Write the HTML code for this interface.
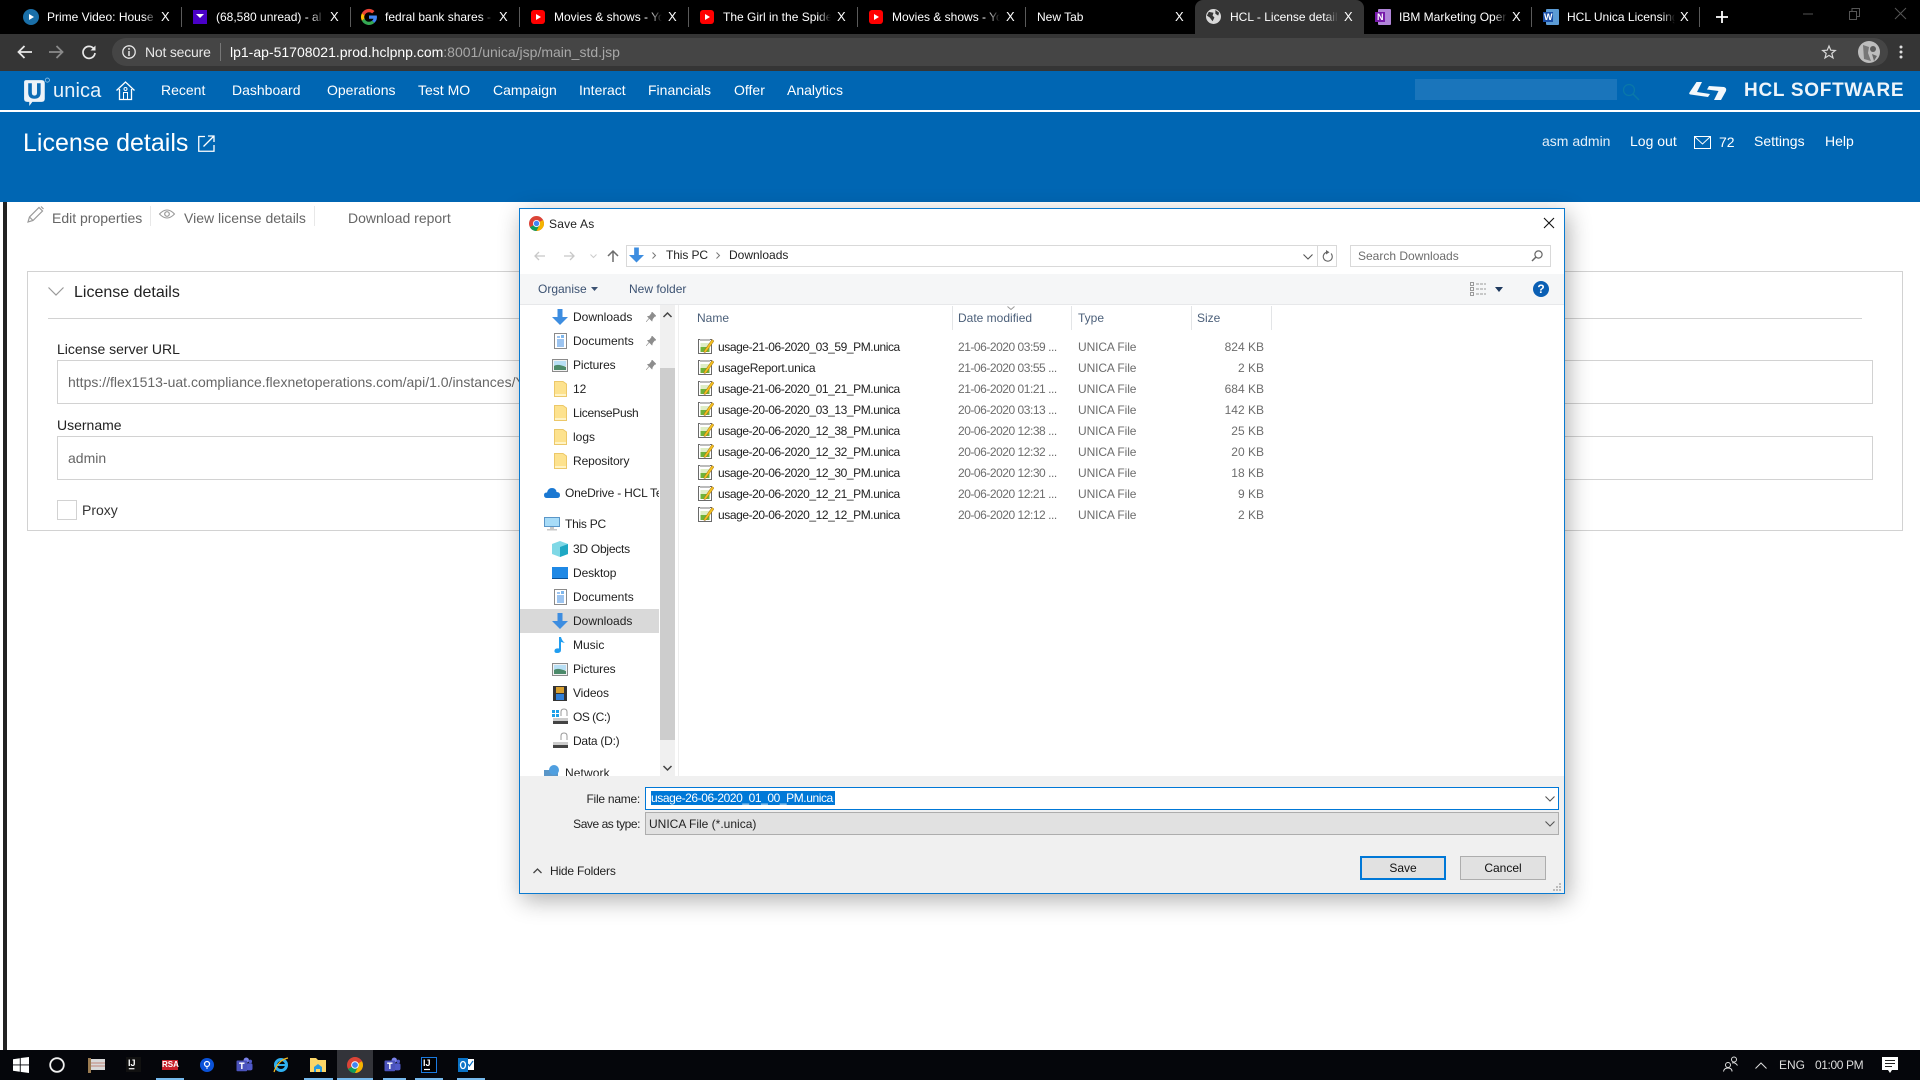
<!DOCTYPE html>
<html><head><meta charset="utf-8"><title>License details</title>
<style>
*{box-sizing:border-box}
html,body{margin:0;padding:0;width:1920px;height:1080px;overflow:hidden;background:#fff;font-family:"Liberation Sans",sans-serif}
.a{position:absolute}
.t{position:absolute;white-space:nowrap;line-height:20px;height:20px;font-size:12px}
.w{color:#fff}
svg{position:absolute;display:block;overflow:visible}
.tab{color:#fff;font-size:12px;overflow:hidden;-webkit-mask-image:linear-gradient(90deg,#000 88%,transparent)}
.x{color:#fff;font-size:13px}
.sep{position:absolute;width:1px;height:20px;top:7px;background:#5a5a5a}
.nav{color:#fff;font-size:14px}
.n{color:#1f1f1f;font-size:12px}
.f{color:#1f1f1f;font-size:12px;letter-spacing:-.42px}
.d{color:#6d6d6d;font-size:12px;letter-spacing:-.47px}
.ty{color:#6d6d6d;font-size:12px;letter-spacing:-.1px}
.s{color:#6d6d6d;font-size:12px;text-align:right;width:60px;left:1204px}
.h{color:#4c607a;font-size:12px}
.vl{position:absolute;width:1px;background:#e3e5e7;top:306px;height:24px}
.tb{position:absolute;top:1078px;height:2px;background:#76b9ed}
</style></head>
<body>
<svg width="0" height="0" style="position:absolute"><defs>
<symbol id="file" viewBox="0 0 16 16"><rect x=".5" y="1.500" width="13" height="14" fill="#fff" stroke="#6a6a6a"/><rect x="2" y="1" width="10" height="2" fill="#bbb"/><rect x="2.500" y="5" width="9" height="9" fill="#dfeec6"/><rect x="2.500" y="9" width="9" height="5" fill="#6fb33a"/><path d="M6 13 L14 1.500 L16 3 L8 14 L6 14.500Z" fill="#f4c020" stroke="#9a6a10" stroke-width=".5"/></symbol>
<symbol id="folder" viewBox="0 0 13 16"><path d="M.5.5H9L12.500 3V15.500H.5Z" fill="#fde28e" stroke="#ecc869"/><rect x="1" y="13" width="11" height="2" fill="#fff3c4"/></symbol>
<symbol id="dl" viewBox="0 0 16 16"><path d="M5.500 0H10.500V8H16L8 16L0 8H5.500Z" fill="#3d8de0"/></symbol>
<symbol id="doc" viewBox="0 0 13 16"><rect x=".5" y=".5" width="12" height="15" fill="#fff" stroke="#8a8a8a"/><path d="M3 4h3M3 7h7M3 9h7M3 11h7M3 13h7" stroke="#3a8ae0" stroke-width="1"/><path d="M7 2h3v3H7z" fill="#7fb7ec"/></symbol>
<symbol id="pic" viewBox="0 0 16 13"><rect x=".5" y=".5" width="15" height="12" fill="#f2f2f2" stroke="#8a8a8a"/><rect x="2" y="2" width="12" height="5" fill="#b8dff5"/><path d="M2 7C5 5 9 6 14 8V11H2Z" fill="#4c8a6a"/></symbol>
<symbol id="pin" viewBox="0 0 10 10"><path d="M6 0L10 4L8.500 4.500L6.500 7L6 9L1.500 4.500L3.500 4L5.500 1.500ZM3 6.500L0 10" fill="#8d8d8d" stroke="#8d8d8d" stroke-width=".6"/></symbol>
<symbol id="yt" viewBox="0 0 14 14"><rect x="0" y="0" width="14" height="14" rx="3" fill="#f00"/><path d="M5 4L10 7L5 10Z" fill="#fff"/></symbol>
<symbol id="chrome" viewBox="0 0 16 16"><circle cx="8" cy="8" r="8" fill="#db4437"/><path d="M8 8L1 12A8 8 0 0 0 8 16L12 8Z" fill="#0f9d58"/><path d="M8 8L12 8L8 16A8 8 0 0 0 16 8A8 8 0 0 0 15 4.200Z" fill="#f4b400"/><circle cx="8" cy="8" r="3.800" fill="#fff"/><circle cx="8" cy="8" r="2.900" fill="#4285f4"/></symbol>
<symbol id="teams" viewBox="0 0 18 18"><circle cx="11" cy="3.500" r="3" fill="#7b83eb"/><circle cx="15.500" cy="5" r="2" fill="#5059c9"/><rect x="11" y="7" width="7" height="8" rx="2" fill="#5059c9"/><rect x="0" y="4" width="12" height="12" rx="1" fill="#4b53bc"/><path d="M3 7h6M6 7v6.500" stroke="#fff" stroke-width="1.600"/></symbol>
<symbol id="ij" viewBox="0 0 16 16"><rect width="16" height="16" fill="#111"/><path d="M3 12.500h6" stroke="#fff" stroke-width="1.200"/></symbol>
<symbol id="down" viewBox="0 0 10 6"><path d="M.5.5L5 5L9.500.5" fill="none" stroke="#555" stroke-width="1.100"/></symbol>
</defs></svg>

<!-- browser chrome -->
<div class="a" style="left:0;top:0;width:1920px;height:34px;background:#000"></div>
<div class="a" style="left:1195px;top:0;width:169px;height:34px;background:#353535;border-radius:8px 8px 0 0"></div>
<div class="a" style="left:0;top:34px;width:1920px;height:37px;background:#353535"></div>
<div class="a" style="left:112px;top:38px;width:1776px;height:28px;border-radius:14px;background:#454545"></div>

<i class="sep" style="left:181px"></i><i class="sep" style="left:350px"></i><i class="sep" style="left:519px"></i><i class="sep" style="left:688px"></i><i class="sep" style="left:857px"></i><i class="sep" style="left:1025px"></i><i class="sep" style="left:1531px"></i><i class="sep" style="left:1699px"></i>

<svg style="left:23px;top:9px" width="16" height="16" viewBox="0 0 16 16"><circle cx="8" cy="8" r="8" fill="#1a6fa8"/><path d="M6 5L11 8L6 11Z" fill="#fff"/></svg>
<span class="t tab" style="left:47px;top:7px;width:110px">Prime Video: House</span><span class="t x" style="left:161px;top:7px">X</span>
<svg style="left:193px;top:10px" width="14" height="14" viewBox="0 0 14 14"><rect width="14" height="14" fill="#4a00c8"/><path d="M3 4H11L7 8Z" fill="#fff"/></svg>
<span class="t tab" style="left:216px;top:7px;width:108px">(68,580 unread) - al</span><span class="t x" style="left:330px;top:7px">X</span>
<svg style="left:361px;top:9px" width="16" height="16" viewBox="0 0 16 16"><path d="M8 3.200a4.800 4.800 0 0 1 3.200 1.200l2.300-2.300A8 8 0 0 0 .9 4.300l2.700 2.100A4.800 4.800 0 0 1 8 3.200z" fill="#ea4335"/><path d="M3.200 8a4.800 4.800 0 0 1 .4-1.600L.9 4.300a8 8 0 0 0 0 7.400l2.700-2.100A4.800 4.800 0 0 1 3.200 8z" fill="#fbbc05"/><path d="M8 12.800a4.800 4.800 0 0 1-4.400-3.200L.9 11.700A8 8 0 0 0 13.500 13.800l-2.500-2a4.800 4.800 0 0 1-3 1z" fill="#34a853"/><path d="M15.800 6.500H8v3.200h4.500a3.900 3.900 0 0 1-1.500 2.100l2.500 2a8 8 0 0 0 2.300-7.300z" fill="#4285f4"/></svg>
<span class="t tab" style="left:385px;top:7px;width:108px">fedral bank shares - G</span><span class="t x" style="left:499px;top:7px">X</span>
<svg style="left:531px;top:10px" width="14" height="14"><use href="#yt"/></svg>
<span class="t tab" style="left:554px;top:7px;width:108px">Movies &amp; shows - YouTube</span><span class="t x" style="left:668px;top:7px">X</span>
<svg style="left:700px;top:10px" width="14" height="14"><use href="#yt"/></svg>
<span class="t tab" style="left:723px;top:7px;width:108px">The Girl in the Spider's</span><span class="t x" style="left:837px;top:7px">X</span>
<svg style="left:869px;top:10px" width="14" height="14"><use href="#yt"/></svg>
<span class="t tab" style="left:892px;top:7px;width:108px">Movies &amp; shows - YouTube</span><span class="t x" style="left:1006px;top:7px">X</span>
<span class="t tab" style="left:1037px;top:7px;width:108px">New Tab</span><span class="t x" style="left:1175px;top:7px">X</span>
<svg style="left:1206px;top:9px" width="15" height="15" viewBox="0 0 16 16"><circle cx="8" cy="8" r="8" fill="#d8d8d8"/><path d="M3 3L8 4L7 7L9 9L7 13L4 9L1 7ZM10 1L14 4L13 7L10 5Z" fill="#353535"/></svg>
<span class="t tab" style="left:1230px;top:7px;width:108px">HCL - License details</span><span class="t x" style="left:1344px;top:7px">X</span>
<svg style="left:1375px;top:9px" width="16" height="16" viewBox="0 0 16 16"><rect x="3" width="13" height="16" rx="1" fill="#b084d8"/><rect x="0" y="3" width="10" height="10" fill="#7719aa"/></svg>
<span class="a" style="left:1377px;top:12px;color:#fff;font-size:9px;font-weight:bold;line-height:10px">N</span>
<span class="t tab" style="left:1399px;top:7px;width:108px">IBM Marketing Operations</span><span class="t x" style="left:1512px;top:7px">X</span>
<svg style="left:1543px;top:9px" width="16" height="16" viewBox="0 0 16 16"><rect x="3" width="13" height="16" rx="1" fill="#5b9bd5"/><rect x="0" y="3" width="10" height="10" fill="#1a4fa8"/></svg>
<span class="a" style="left:1544px;top:12px;color:#fff;font-size:9px;font-weight:bold;line-height:10px">W</span>
<span class="t tab" style="left:1567px;top:7px;width:108px">HCL Unica Licensing</span><span class="t x" style="left:1680px;top:7px">X</span>
<svg style="left:1716px;top:11px" width="12" height="12"><path d="M6 0V12M0 6H12" stroke="#fff" stroke-width="1.800"/></svg>
<svg style="left:1803px;top:13px" width="10" height="2"><path d="M0 1H10" stroke="#555"/></svg>
<svg style="left:1849px;top:8px" width="11" height="12"><path d="M.5 3.500H7.500V11.500H.5ZM3 3.500V.5H10.500V8.500H7.500" fill="none" stroke="#555"/></svg>
<svg style="left:1895px;top:8px" width="11" height="11"><path d="M0 0L11 11M11 0L0 11" stroke="#555"/></svg>

<!-- toolbar icons -->
<svg style="left:17px;top:45px" width="15" height="14"><path d="M15 7H2M7.500 1L1.500 7L7.500 13" fill="none" stroke="#e8e8e8" stroke-width="1.800"/></svg>
<svg style="left:49px;top:45px" width="15" height="14"><path d="M0 7H13M7.500 1L13.500 7L7.500 13" fill="none" stroke="#8a8a8a" stroke-width="1.800"/></svg>
<svg style="left:82px;top:45px" width="14" height="14" viewBox="0 0 14 14"><path d="M12 4A6 6 0 1 0 13 8" fill="none" stroke="#e8e8e8" stroke-width="1.700"/><path d="M13.500 .5V5.500H8.500Z" fill="#e8e8e8"/></svg>
<svg style="left:122px;top:45px" width="14" height="14"><circle cx="7" cy="7" r="6.200" fill="none" stroke="#e8e8e8" stroke-width="1.300"/><path d="M7 6V11M7 3V4.800" stroke="#e8e8e8" stroke-width="1.500"/></svg>
<span class="t" style="left:145px;top:42px;color:#e8e8e8;font-size:14px;letter-spacing:-.2px">Not secure</span>
<i class="a" style="left:220px;top:43px;width:1px;height:18px;background:#777"></i>
<span class="t" style="left:230px;top:42px;color:#fff;font-size:14px">lp1-ap-51708021.prod.hclpnp.com<span style="color:#a8a8a8">:8001/unica/jsp/main_std.jsp</span></span>
<svg style="left:1822px;top:45px" width="14" height="14" viewBox="0 0 14 14"><path d="M7 1L8.800 5.200L13.300 5.500L9.800 8.400L11 12.900L7 10.400L3 12.900L4.200 8.400L.7 5.500L5.200 5.200Z" fill="none" stroke="#d8d8d8" stroke-width="1.200"/></svg>
<svg style="left:1858px;top:41px" width="22" height="22" viewBox="0 0 22 22"><circle cx="11" cy="11" r="11" fill="#bdbdbd"/><path d="M5 4L11 6L10 12L13 20L6 18Z" fill="#777"/><circle cx="15" cy="8" r="3" fill="#5c5c5c"/><path d="M14 13L19 15L16 20Z" fill="#666"/></svg>
<svg style="left:1899px;top:45px" width="4" height="14"><circle cx="2" cy="2" r="1.500" fill="#e0e0e0"/><circle cx="2" cy="7" r="1.500" fill="#e0e0e0"/><circle cx="2" cy="12" r="1.500" fill="#e0e0e0"/></svg>

<!-- blue header -->
<div class="a" style="left:0;top:71px;width:1920px;height:131px;background:#0066b3"></div>
<div class="a" style="left:0;top:110px;width:1920px;height:2px;background:#fff"></div>
<svg style="left:22px;top:77px" width="29" height="30" viewBox="0 0 28 29"><path d="M2 4Q2 2 4 2H19Q22 2 22 5V20Q22 23 19 23H10L7 27V23H5Q2 23 2 20Z" fill="#eef3f8" transform="translate(0,1)"/><path d="M6 6H9.500V15Q9.500 18 12 18Q14.500 18 14.500 15V6H18V15Q18 21 12 21Q6 21 6 15Z" fill="#0d6cb5"/><circle cx="24.500" cy="3" r="2" fill="none" stroke="#8cc0e6" stroke-width=".8"/></svg>
<span class="t w" style="left:53px;top:80px;font-size:20px;line-height:22px;height:22px;letter-spacing:.1px;color:#eaf3fa">unica</span>
<svg style="left:116px;top:81px" width="19" height="19" viewBox="0 0 19 19"><path d="M.5 9.500L9.500 1L18.500 9.500M3.500 8V18.500H15.500V8" fill="none" stroke="#fff" stroke-width="1.300"/><circle cx="9.500" cy="8" r="1.500" fill="none" stroke="#fff"/><path d="M7.500 18.500V11.500H11.500V18.500" fill="none" stroke="#fff"/></svg>
<span class="t nav" style="left:161px;top:80px">Recent</span>
<span class="t nav" style="left:232px;top:80px">Dashboard</span>
<span class="t nav" style="left:327px;top:80px">Operations</span>
<span class="t nav" style="left:418px;top:80px">Test MO</span>
<span class="t nav" style="left:493px;top:80px">Campaign</span>
<span class="t nav" style="left:579px;top:80px">Interact</span>
<span class="t nav" style="left:648px;top:80px">Financials</span>
<span class="t nav" style="left:734px;top:80px">Offer</span>
<span class="t nav" style="left:787px;top:80px">Analytics</span>
<div class="a" style="left:1415px;top:79px;width:202px;height:21px;background:#1a75bb"></div>
<svg style="left:1622px;top:83px" width="18" height="18"><circle cx="7" cy="7" r="5.500" fill="none" stroke="#0a78a8" stroke-width="1.200"/><path d="M11 11L17 17" stroke="#0a78a8" stroke-width="1.500"/></svg>
<svg style="left:1689px;top:81px" width="38" height="20" viewBox="0 0 38 20"><path d="M7.500 1H13L8 11L21 13L19 16L1.500 13.500Q-.5 13 .5 11.500Z" fill="#f4f8fb"/><path d="M20 5L35 6Q38 7 37 10L32 19H25L29.500 10L18 8.500Z" fill="#f4f8fb"/></svg>
<span class="t" style="left:1744px;top:79px;color:#eef5fa;font-size:19px;line-height:24px;height:24px;font-weight:bold;letter-spacing:.72px">HCL SOFTWARE</span>
<span class="t w" style="left:23px;top:128px;font-size:25px;line-height:30px;height:30px">License details</span>
<svg style="left:198px;top:135px" width="17" height="17" viewBox="0 0 17 17"><path d="M7 1.500H.75V16.250H16V10" fill="none" stroke="#fff" stroke-width="1.300"/><path d="M5.500 11.500L15.500 1.500M10 1H16V7" fill="none" stroke="#fff" stroke-width="1.300"/></svg>
<span class="t" style="left:1542px;top:131px;color:#e3eff8;font-size:14px">asm admin</span>
<span class="t w" style="left:1630px;top:131px;font-size:14px">Log out</span>
<svg style="left:1694px;top:136px" width="17" height="13"><path d="M.5.5H16.500V12.500H.5ZM.5.5L8.500 8L16.500.5" fill="none" stroke="#fff"/></svg>
<span class="t w" style="left:1719px;top:132px;font-size:14px">72</span>
<span class="t w" style="left:1754px;top:131px;font-size:14px">Settings</span>
<span class="t w" style="left:1825px;top:131px;font-size:14px">Help</span>

<!-- page -->
<div class="a" style="left:3px;top:202px;width:4px;height:848px;background:#222"></div>
<svg style="left:27px;top:206px" width="17" height="17" viewBox="0 0 17 17"><path d="M1 16L2.500 11L12 1.500L15.500 5L6 14.500ZM2.500 11L6 14.500M14 .5L16.500 3" fill="none" stroke="#9a9a9a" stroke-width="1.200"/></svg>
<span class="t" style="left:52px;top:208px;font-size:14px;color:#666">Edit properties</span>
<i class="a" style="left:150px;top:206px;width:1px;height:20px;background:#e8e8e8"></i>
<svg style="left:159px;top:209px" width="16" height="10" viewBox="0 0 16 10"><path d="M.5 5Q8-3 15.500 5Q8 13 .5 5Z" fill="none" stroke="#999"/><circle cx="8" cy="5" r="2.300" fill="none" stroke="#999" stroke-width="1.200"/></svg>
<span class="t" style="left:184px;top:208px;font-size:14px;color:#666">View license details</span>
<i class="a" style="left:314px;top:206px;width:1px;height:20px;background:#e8e8e8"></i>
<span class="t" style="left:348px;top:208px;font-size:14px;color:#666">Download report</span>

<div class="a" style="left:27px;top:271px;width:1876px;height:260px;border:1px solid #d2d2d2"></div>
<svg style="left:48px;top:287px" width="16" height="9"><path d="M.5.5L8 8L15.500.5" fill="none" stroke="#999" stroke-width="1.200"/></svg>
<span class="t" style="left:74px;top:283px;font-size:16px;color:#222">License details</span>
<div class="a" style="left:48px;top:318px;width:1814px;height:1px;background:#d2d2d2"></div>
<span class="t" style="left:57px;top:339px;font-size:14px;color:#222">License server URL</span>
<div class="a" style="left:57px;top:360px;width:1816px;height:44px;border:1px solid #d2d2d2"></div>
<span class="t" style="left:68px;top:372px;font-size:14px;color:#666">https://flex1513-uat.compliance.flexnetoperations.com/api/1.0/instances/YX</span>
<span class="t" style="left:57px;top:415px;font-size:14px;color:#222">Username</span>
<div class="a" style="left:57px;top:436px;width:1816px;height:44px;border:1px solid #d2d2d2"></div>
<span class="t" style="left:68px;top:448px;font-size:14px;color:#666">admin</span>
<div class="a" style="left:57px;top:500px;width:20px;height:20px;border:1px solid #d2d2d2"></div>
<span class="t" style="left:82px;top:500px;font-size:14px;color:#333">Proxy</span>

<!-- dialog -->
<div class="a" style="left:519px;top:208px;width:1046px;height:686px;background:#fff;border:1px solid #0a7ad0;box-shadow:3px 6px 22px rgba(0,0,0,.32)"></div>
<svg style="left:529px;top:216px" width="15" height="15"><use href="#chrome"/></svg>
<span class="t" style="left:549px;top:214px;color:#222;letter-spacing:.2px">Save As</span>
<svg style="left:1544px;top:218px" width="10" height="10"><path d="M0 0L10 10M10 0L0 10" stroke="#111" stroke-width="1.100"/></svg>

<svg style="left:534px;top:251px" width="11" height="10"><path d="M11 5H1M5 1L1 5L5 9" fill="none" stroke="#c8c8c8" stroke-width="1.300"/></svg>
<svg style="left:564px;top:251px" width="11" height="10"><path d="M0 5H10M6 1L10 5L6 9" fill="none" stroke="#c8c8c8" stroke-width="1.300"/></svg>
<svg style="left:590px;top:254px" width="7" height="4"><path d="M.5.5L3.500 3.500L6.500.5" fill="none" stroke="#ccc"/></svg>
<svg style="left:607px;top:250px" width="12" height="12"><path d="M6 12V1M1 6L6 1L11 6" fill="none" stroke="#6d6d6d" stroke-width="1.500"/></svg>
<div class="a" style="left:626px;top:245px;width:711px;height:22px;border:1px solid #d9d9d9"></div>
<i class="a" style="left:1317px;top:246px;width:1px;height:20px;background:#d9d9d9"></i>
<svg style="left:629px;top:247px" width="15" height="16"><use href="#dl"/></svg>
<svg style="left:652px;top:252px" width="5" height="7"><path d="M.5.5L3.500 3.500L.5 6.500" fill="none" stroke="#777"/></svg>
<span class="t" style="left:666px;top:245px;color:#222;letter-spacing:-.1px">This PC</span>
<svg style="left:716px;top:252px" width="5" height="7"><path d="M.5.5L3.500 3.500L.5 6.500" fill="none" stroke="#777"/></svg>
<span class="t" style="left:729px;top:245px;color:#222">Downloads</span>
<svg style="left:1303px;top:254px" width="10" height="6"><use href="#down"/></svg>
<svg style="left:1322px;top:250px" width="11" height="12" viewBox="0 0 11 12"><path d="M9 3.500A4.500 4.500 0 1 1 5 2.200" fill="none" stroke="#666" stroke-width="1.100"/><path d="M4 0L7.500 2.300L4 4.500Z" fill="#666"/></svg>
<div class="a" style="left:1350px;top:245px;width:201px;height:22px;border:1px solid #d9d9d9"></div>
<span class="t" style="left:1358px;top:246px;color:#6d6d6d">Search Downloads</span>
<svg style="left:1531px;top:250px" width="12" height="12" viewBox="0 0 12 12"><circle cx="7.500" cy="4.500" r="3.600" fill="none" stroke="#666" stroke-width="1.200"/><path d="M5 7L1 11" stroke="#666" stroke-width="1.500"/></svg>

<div class="a" style="left:520px;top:274px;width:1044px;height:31px;background:#f5f6f7;border-bottom:1px solid #e7e8ea"></div>
<span class="t" style="left:538px;top:279px;color:#3c5272">Organise</span>
<svg style="left:591px;top:287px" width="7" height="4"><path d="M0 0H7L3.500 4Z" fill="#3c5272"/></svg>
<span class="t" style="left:629px;top:279px;color:#3c5272">New folder</span>
<svg style="left:1470px;top:282px" width="16" height="14" viewBox="0 0 16 14"><path d="M.5.5h3v3h-3zM.5 5.500h3v3h-3zM.5 10.500h3v3h-3z" fill="none" stroke="#999"/><path d="M6 2h10M6 7h10M6 12h10" stroke="#999" stroke-dasharray="3 1"/></svg>
<svg style="left:1495px;top:287px" width="8" height="5"><path d="M0 0H8L4 5Z" fill="#1f3a5f"/></svg>
<svg style="left:1533px;top:281px" width="16" height="16"><circle cx="8" cy="8" r="8" fill="#0a5fb4"/></svg>
<span class="t" style="left:1533px;top:279px;width:16px;text-align:center;color:#fff;font-weight:bold">?</span>

<!-- nav pane -->
<div class="a" style="left:520px;top:609px;width:139px;height:24px;background:#d9d9d9"></div>
<svg style="left:552px;top:309px" width="16" height="16"><use href="#dl"/></svg><span class="t n" style="left:573px;top:307px">Downloads</span>
<svg style="left:646px;top:312px" width="10" height="10"><use href="#pin"/></svg>
<svg style="left:554px;top:333px" width="13" height="16"><use href="#doc"/></svg><span class="t n" style="left:573px;top:331px">Documents</span>
<svg style="left:646px;top:336px" width="10" height="10"><use href="#pin"/></svg>
<svg style="left:552px;top:359px" width="16" height="13"><use href="#pic"/></svg><span class="t n" style="left:573px;top:355px;letter-spacing:-.1px">Pictures</span>
<svg style="left:646px;top:360px" width="10" height="10"><use href="#pin"/></svg>
<svg style="left:554px;top:381px" width="13" height="16"><use href="#folder"/></svg><span class="t n" style="left:573px;top:379px">12</span>
<svg style="left:554px;top:405px" width="13" height="16"><use href="#folder"/></svg><span class="t n" style="left:573px;top:403px;letter-spacing:-.3px">LicensePush</span>
<svg style="left:554px;top:429px" width="13" height="16"><use href="#folder"/></svg><span class="t n" style="left:573px;top:427px">logs</span>
<svg style="left:554px;top:453px" width="13" height="16"><use href="#folder"/></svg><span class="t n" style="left:573px;top:451px;letter-spacing:-.1px">Repository</span>
<svg style="left:544px;top:487px" width="16" height="11" viewBox="0 0 16 11"><path d="M3 11Q0 11 0 8Q0 5.500 3 5.500Q4 1 8 1Q12 1 12.500 5Q16 5 16 8Q16 11 13 11Z" fill="#1a78d2"/></svg>
<span class="t n" style="left:565px;top:483px;width:94px;overflow:hidden;letter-spacing:-.2px">OneDrive - HCL Technologies</span>
<svg style="left:544px;top:517px" width="16" height="14" viewBox="0 0 16 14"><rect x=".5" y=".5" width="15" height="9" fill="#a8dcf8" stroke="#5a96c8"/><path d="M6 10V12H3V13.500H13V12H10V10" fill="#c8c8c8"/></svg><span class="t n" style="left:565px;top:514px;letter-spacing:-.25px">This PC</span>
<svg style="left:552px;top:541px" width="16" height="16" viewBox="0 0 16 16"><path d="M8 0L16 3V13L8 16L0 13V3Z" fill="#7fd8e6"/><path d="M8 6L16 3V13L8 16Z" fill="#1ea8c4"/></svg><span class="t n" style="left:573px;top:539px;letter-spacing:-.25px">3D Objects</span>
<svg style="left:552px;top:567px" width="16" height="12"><rect width="16" height="11" fill="#1e88e5"/><rect y="11" width="16" height="1" fill="#0a4f94"/></svg><span class="t n" style="left:573px;top:563px;letter-spacing:-.1px">Desktop</span>
<svg style="left:554px;top:589px" width="13" height="16"><use href="#doc"/></svg><span class="t n" style="left:573px;top:587px">Documents</span>
<svg style="left:552px;top:613px" width="16" height="16"><use href="#dl"/></svg><span class="t n" style="left:573px;top:611px">Downloads</span>
<svg style="left:554px;top:637px" width="12" height="16" viewBox="0 0 12 16"><path d="M5 0H7Q8 4 11 6Q9 5.500 7 5V13Q7 16 3 16Q0 16 .5 13.500Q1 11 5 11.500Z" fill="#1f9df0"/></svg><span class="t n" style="left:573px;top:635px">Music</span>
<svg style="left:552px;top:663px" width="16" height="13"><use href="#pic"/></svg><span class="t n" style="left:573px;top:659px;letter-spacing:-.1px">Pictures</span>
<svg style="left:553px;top:686px" width="14" height="15" viewBox="0 0 14 15"><rect width="14" height="15" fill="#333"/><rect x="3" y="1" width="8" height="6" fill="#d8a030"/><rect x="3" y="8" width="8" height="6" fill="#2f7fd8"/></svg><span class="t n" style="left:573px;top:683px;letter-spacing:-.1px">Videos</span>
<svg style="left:552px;top:709px" width="16" height="16" viewBox="0 0 16 16"><path d="M0 1h3v3H0zM4 1h3v3H4zM0 5h3v3H0zM4 5h3v3H4z" fill="#1ea0e8"/><path d="M9 7V3Q9 0 12 0Q15 0 15 3V7" fill="none" stroke="#999"/><rect x="1" y="9" width="15" height="3" fill="#ccc"/><rect x="1" y="12" width="15" height="3" fill="#444"/></svg><span class="t n" style="left:573px;top:707px;letter-spacing:-.5px">OS (C:)</span>
<svg style="left:552px;top:733px" width="16" height="16" viewBox="0 0 16 16"><path d="M9 7V3Q9 0 12 0Q15 0 15 3V7" fill="none" stroke="#999"/><rect x="1" y="9" width="15" height="3" fill="#ccc"/><rect x="1" y="12" width="15" height="3" fill="#444"/></svg><span class="t n" style="left:573px;top:731px;letter-spacing:-.25px">Data (D:)</span>
<svg style="left:544px;top:765px" width="16" height="14" viewBox="0 0 16 14"><rect y="5" width="14" height="9" fill="#5a96c8"/><circle cx="10" cy="5" r="5" fill="#4f9fe0"/></svg><span class="t n" style="left:565px;top:763px;letter-spacing:.1px">Network</span>

<div class="a" style="left:660px;top:305px;width:15px;height:471px;background:#f0f0f0"></div>
<div class="a" style="left:660px;top:368px;width:15px;height:372px;background:#cdcdcd"></div>
<svg style="left:663px;top:312px" width="9" height="6"><path d="M.5 5L4.500 1L8.500 5" fill="none" stroke="#444" stroke-width="1.500"/></svg>
<svg style="left:663px;top:765px" width="9" height="6"><path d="M.5 1L4.500 5L8.500 1" fill="none" stroke="#444" stroke-width="1.500"/></svg>
<i class="a" style="left:678px;top:305px;width:1px;height:471px;background:#eee"></i>

<!-- file list -->
<span class="t h" style="left:697px;top:308px">Name</span>
<i class="vl" style="left:952px"></i>
<span class="t h" style="left:958px;top:308px">Date modified</span>
<svg style="left:1007px;top:306px" width="8" height="4"><path d="M.5.5L4 3.500L7.500.5" fill="none" stroke="#999"/></svg>
<i class="vl" style="left:1071px"></i>
<span class="t h" style="left:1078px;top:308px">Type</span>
<i class="vl" style="left:1191px"></i>
<span class="t h" style="left:1197px;top:308px">Size</span>
<i class="vl" style="left:1271px"></i>

<svg style="left:698px;top:338px" width="16" height="16"><use href="#file"/></svg><span class="t f" style="left:718px;top:337px">usage-21-06-2020_03_59_PM.unica</span><span class="t d" style="left:958px;top:337px">21-06-2020 03:59 ...</span><span class="t ty" style="left:1078px;top:337px">UNICA File</span><span class="t s" style="top:337px">824 KB</span>
<svg style="left:698px;top:359px" width="16" height="16"><use href="#file"/></svg><span class="t f" style="left:718px;top:358px;letter-spacing:-.2px">usageReport.unica</span><span class="t d" style="left:958px;top:358px">21-06-2020 03:55 ...</span><span class="t ty" style="left:1078px;top:358px">UNICA File</span><span class="t s" style="top:358px">2 KB</span>
<svg style="left:698px;top:380px" width="16" height="16"><use href="#file"/></svg><span class="t f" style="left:718px;top:379px">usage-21-06-2020_01_21_PM.unica</span><span class="t d" style="left:958px;top:379px">21-06-2020 01:21 ...</span><span class="t ty" style="left:1078px;top:379px">UNICA File</span><span class="t s" style="top:379px">684 KB</span>
<svg style="left:698px;top:401px" width="16" height="16"><use href="#file"/></svg><span class="t f" style="left:718px;top:400px">usage-20-06-2020_03_13_PM.unica</span><span class="t d" style="left:958px;top:400px">20-06-2020 03:13 ...</span><span class="t ty" style="left:1078px;top:400px">UNICA File</span><span class="t s" style="top:400px">142 KB</span>
<svg style="left:698px;top:422px" width="16" height="16"><use href="#file"/></svg><span class="t f" style="left:718px;top:421px">usage-20-06-2020_12_38_PM.unica</span><span class="t d" style="left:958px;top:421px">20-06-2020 12:38 ...</span><span class="t ty" style="left:1078px;top:421px">UNICA File</span><span class="t s" style="top:421px">25 KB</span>
<svg style="left:698px;top:443px" width="16" height="16"><use href="#file"/></svg><span class="t f" style="left:718px;top:442px">usage-20-06-2020_12_32_PM.unica</span><span class="t d" style="left:958px;top:442px">20-06-2020 12:32 ...</span><span class="t ty" style="left:1078px;top:442px">UNICA File</span><span class="t s" style="top:442px">20 KB</span>
<svg style="left:698px;top:464px" width="16" height="16"><use href="#file"/></svg><span class="t f" style="left:718px;top:463px">usage-20-06-2020_12_30_PM.unica</span><span class="t d" style="left:958px;top:463px">20-06-2020 12:30 ...</span><span class="t ty" style="left:1078px;top:463px">UNICA File</span><span class="t s" style="top:463px">18 KB</span>
<svg style="left:698px;top:485px" width="16" height="16"><use href="#file"/></svg><span class="t f" style="left:718px;top:484px">usage-20-06-2020_12_21_PM.unica</span><span class="t d" style="left:958px;top:484px">20-06-2020 12:21 ...</span><span class="t ty" style="left:1078px;top:484px">UNICA File</span><span class="t s" style="top:484px">9 KB</span>
<svg style="left:698px;top:506px" width="16" height="16"><use href="#file"/></svg><span class="t f" style="left:718px;top:505px">usage-20-06-2020_12_12_PM.unica</span><span class="t d" style="left:958px;top:505px">20-06-2020 12:12 ...</span><span class="t ty" style="left:1078px;top:505px">UNICA File</span><span class="t s" style="top:505px">2 KB</span>

<!-- bottom panel -->
<div class="a" style="left:520px;top:776px;width:1044px;height:117px;background:#f0f0f0"></div>
<span class="t" style="left:560px;top:789px;width:80px;text-align:right;color:#222;letter-spacing:-.25px">File name:</span>
<span class="t" style="left:540px;top:814px;width:100px;text-align:right;color:#222;letter-spacing:-.45px">Save as type:</span>
<div class="a" style="left:645px;top:787px;width:914px;height:23px;background:#fff;border:1px solid #0078d7"></div>
<div class="a" style="left:651px;top:791px;width:184px;height:14px;background:#0078d7"></div>
<span class="t f" style="left:651px;top:788px;color:#fff">usage-26-06-2020_01_00_PM.unica</span>
<svg style="left:1545px;top:796px" width="10" height="6"><use href="#down"/></svg>
<div class="a" style="left:645px;top:812px;width:914px;height:23px;background:#e1e1e1;border:1px solid #adadad"></div>
<span class="t" style="left:649px;top:814px;color:#222">UNICA File (*.unica)</span>
<svg style="left:1545px;top:821px" width="10" height="6"><use href="#down"/></svg>
<svg style="left:533px;top:868px" width="9" height="6"><path d="M.5 5L4.500 1L8.500 5" fill="none" stroke="#444" stroke-width="1.300"/></svg>
<span class="t" style="left:550px;top:861px;color:#222;letter-spacing:-.2px">Hide Folders</span>
<div class="a" style="left:1360px;top:856px;width:86px;height:24px;background:#e1e1e1;border:2px solid #0078d7"></div>
<span class="t" style="left:1360px;top:858px;width:86px;text-align:center;color:#111">Save</span>
<div class="a" style="left:1460px;top:856px;width:86px;height:24px;background:#e1e1e1;border:1px solid #adadad"></div>
<span class="t" style="left:1460px;top:858px;width:86px;text-align:center;color:#111">Cancel</span>
<svg style="left:1553px;top:883px" width="9" height="9" viewBox="0 0 9 9"><path d="M6 0h2v2H6zM3 3h2v2H3zM6 3h2v2H6zM0 6h2v2H0zM3 6h2v2H3zM6 6h2v2H6z" fill="#bbb"/></svg>

<!-- taskbar -->
<div class="a" style="left:0;top:1050px;width:1920px;height:30px;background:#05060b"></div>
<div class="a" style="left:337px;top:1050px;width:36px;height:30px;background:#33343a"></div>
<i class="tb" style="left:156px;width:28px"></i><i class="tb" style="left:304px;width:29px"></i><i class="tb" style="left:337px;width:36px"></i><i class="tb" style="left:383px;width:23px"></i><i class="tb" style="left:415px;width:28px"></i><i class="tb" style="left:457px;width:28px"></i>
<svg style="left:13px;top:1057px" width="16" height="16" viewBox="0 0 16 16"><path d="M0 2.200L6.800 1.200V7.500H0ZM7.700 1L16 0V7.500H7.700ZM0 8.400H6.800V14.800L0 13.800ZM7.700 8.400H16V16L7.700 14.900Z" fill="#fff"/></svg>
<svg style="left:49px;top:1057px" width="16" height="16"><circle cx="8" cy="8" r="6.800" fill="none" stroke="#f0f0f0" stroke-width="1.800"/></svg>
<svg style="left:88px;top:1058px" width="17" height="15" viewBox="0 0 17 15"><rect x="3" y="1" width="14" height="11" fill="#d8d8d8"/><path d="M3 5H17M3 8H17" stroke="#b86a5a" stroke-width=".8"/><rect x="0" y="0" width="3" height="15" fill="#9a7a50"/></svg>
<svg style="left:126px;top:1057px" width="15" height="15"><use href="#ij"/></svg>
<span class="a" style="left:128px;top:1058px;color:#fff;font-size:9px;line-height:10px;font-weight:bold">IJ</span>
<div class="a" style="left:162px;top:1060px;width:16px;height:10px;background:#c8202a;color:#fff;font-size:8px;line-height:10px;font-weight:bold;text-align:center">RSA</div>
<svg style="left:200px;top:1058px" width="14" height="14"><circle cx="7" cy="7" r="7" fill="#0a52d8"/><circle cx="7" cy="6" r="2.500" fill="none" stroke="#fff" stroke-width="1.200"/><path d="M7 8.500V11" stroke="#fff"/></svg>
<svg style="left:236px;top:1057px" width="17" height="16"><use href="#teams"/></svg>
<svg style="left:273px;top:1057px" width="16" height="16" viewBox="0 0 16 16"><circle cx="8" cy="8" r="5.500" fill="none" stroke="#2fb0f0" stroke-width="3"/><path d="M4 8H12" stroke="#2fb0f0" stroke-width="2"/><path d="M1 15Q5 3 15 1" fill="none" stroke="#f4b820" stroke-width="1.200"/></svg>
<svg style="left:310px;top:1057px" width="16" height="15" viewBox="0 0 16 15"><path d="M0 1H6L8 3H16V15H0Z" fill="#fcd668"/><path d="M4 15V10L8 7L12 10V15H10V12H6V15Z" fill="#2a9be0"/></svg>
<svg style="left:347px;top:1057px" width="16" height="16"><use href="#chrome"/></svg>
<svg style="left:384px;top:1057px" width="17" height="16"><use href="#teams"/></svg>
<svg style="left:421px;top:1057px" width="16" height="16" viewBox="0 0 16 16"><rect x=".5" y=".5" width="15" height="15" fill="#000" stroke="#1a7ae0"/><path d="M3 12.500h6" stroke="#fff" stroke-width="1.200"/></svg>
<span class="a" style="left:423px;top:1058px;color:#fff;font-size:9px;line-height:10px;font-weight:bold">IJ</span>
<svg style="left:458px;top:1057px" width="16" height="16" viewBox="0 0 16 16"><rect x="7" y="2" width="9" height="11" fill="#fff"/><path d="M10 7L11.500 9L15 4" fill="none" stroke="#0a72c6" stroke-width="1.200"/><rect x="0" y="1" width="10" height="14" fill="#0a72c6"/><ellipse cx="5" cy="8" rx="2.500" ry="3.500" fill="none" stroke="#fff" stroke-width="1.300"/></svg>
<svg style="left:1723px;top:1056px" width="15" height="16" viewBox="0 0 15 16"><circle cx="5" cy="9" r="2.500" fill="none" stroke="#ddd"/><path d="M.5 15.500Q1 12 5 12Q9 12 9 15.500" fill="none" stroke="#ddd"/><circle cx="11" cy="3.500" r="2.500" fill="none" stroke="#ddd"/><path d="M9 7Q12 6 14.500 9.500" fill="none" stroke="#ddd"/></svg>
<svg style="left:1755px;top:1062px" width="12" height="7"><path d="M.5 6.500L6 1L11.500 6.500" fill="none" stroke="#ddd"/></svg>
<span class="t" style="left:1779px;top:1055px;color:#ddd">ENG</span>
<span class="t" style="left:1815px;top:1055px;color:#ddd;letter-spacing:-.4px">01:00 PM</span>
<svg style="left:1882px;top:1057px" width="16" height="17" viewBox="0 0 16 17"><path d="M0 0H16V13H10L8 16L6 13H0Z" fill="#fff"/><path d="M3 3.500H13M3 6.500H13M3 9.500H10" stroke="#222"/></svg>
</body></html>
